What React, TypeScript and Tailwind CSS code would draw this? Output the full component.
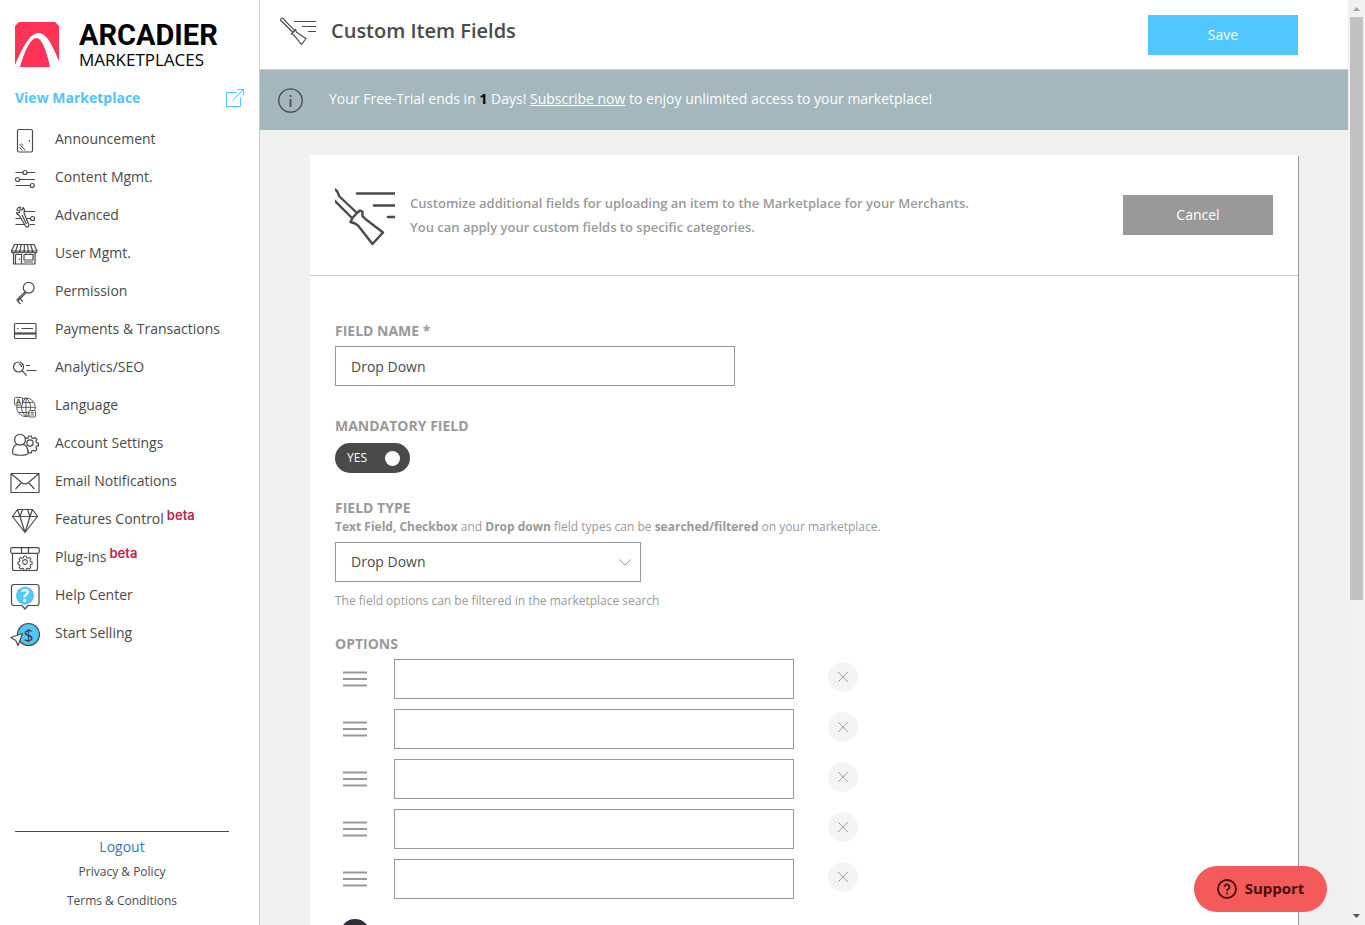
import { useState } from 'react';
import type { ReactNode } from 'react';

const GEAR =
  'M-1.3-7h2.6l.5 1.9 1.5.6 1.7-1 1.9 1.9-1 1.7.6 1.5 1.9.5v2.6l-1.9.5-.6 1.5 1 1.7-1.9 1.9-1.7-1-1.5.6-.5 1.9h-2.6l-.5-1.9-1.5-.6-1.7 1-1.9-1.9 1-1.7-.6-1.5-1.9-.5v-2.6l1.9-.5.6-1.5-1-1.7 1.9-1.9 1.7 1 1.5-.6z';

type Item = { label: string; beta?: boolean; icon: ReactNode };

const items: Item[] = [
  {
    label: 'Announcement',
    icon: (
      <>
        <rect x="7.5" y="7.5" width="15" height="22.5" rx="1.5" />
        <path d="M19.3 18v2M9.5 22l6 6.500M9.500 25.500l2.800 3M11.500 21.500l1.500 2" strokeWidth="1" />
      </>
    ),
  },
  {
    label: 'Content Mgmt.',
    icon: (
      <>
        <path d="M5.5 12.5H13M17 12.5h8M9.5 19.5H25M5.5 25.5h14.500" />
        <circle cx="15" cy="12.500" r="2" />
        <circle cx="7.500" cy="19.500" r="2" />
        <circle cx="22.300" cy="25.500" r="2" />
      </>
    ),
  },
  {
    label: 'Advanced',
    icon: (
      <>
        <path d="M15 13.500h10M5.500 20.500h6M17 20.500h3.500M5.500 26.500H15M20 26.500h5" />
        <circle cx="22.500" cy="20.500" r="2" />
        <path d="M9 17l6.500 11a1.800 1.800 0 0 0 3.200-1.800L14 15c1-2 .5-4-1-5.500l-1 2.500-2-.5.500-2.500C8 9.500 6.800 11 7 12.500l3 .5-1 2-2.500-.5C7 16.500 8 17 9 17zM12 17l4.500 9" />
      </>
    ),
  },
  {
    label: 'User Mgmt.',
    icon: (
      <>
        <path d="M4.500 8.500h19.500l3 6.500H1.500zM1.500 15c0 2.600 4 2.600 4.200 0 .2 2.600 4 2.600 4.200 0 .2 2.600 4 2.600 4.300 0 .2 2.600 4 2.600 4.200 0 .2 2.600 4 2.600 4.200 0 .2 2.600 4.200 2.600 4.400 0M7.800 8.500L5.700 15M11.200 8.500L9.900 15M14.300 8.500V15M17.400 8.500l1 6.500M20.500 8.500l2.100 6.500" />
        <path d="M3.500 17v11h21.500V17M5.500 28v-9.500h6V28M14 18.500h9v5.500h-9zM9.500 22.500v1.500M14 26h9" />
      </>
    ),
  },
  {
    label: 'Permission',
    icon: (
      <>
        <circle cx="18.700" cy="13.700" r="5.400" />
        <path d="M15 17.800L6.800 26M16 18.800l-8.500 8.500M6.800 26l3.700 4M9 23.700l3.700 3.800" />
      </>
    ),
  },
  {
    label: 'Payments & Transactions',
    icon: (
      <>
        <rect x="4.500" y="11.500" width="21.500" height="15" rx="1" />
        <path d="M7 16.500h1.500M11.500 16.500h11.500" />
        <path d="M4.500 21.500H26" strokeWidth="2.200" />
      </>
    ),
  },
  {
    label: 'Analytics/SEO',
    icon: (
      <>
        <circle cx="8.500" cy="17" r="5" />
        <path d="M12.200 20.700l4.500 5M16 15.500h4M16.500 20.500h10M8.500 14a3 3 0 0 1 3 3" />
      </>
    ),
  },
  {
    label: 'Language',
    icon: (
      <g strokeWidth="0.900">
        <circle cx="16" cy="19.300" r="9.300" />
        <path d="M16 10v18.600M6.700 19.300h18.600M8.500 14.500h15M8.500 24.500h15M16 10c-6 5-6 13.600 0 18.600M16 10c6 5 6 13.600 0 18.600" />
        <rect x="4.500" y="9.500" width="8" height="7.500" rx="1" fill="white" />
        <rect x="19" y="22.500" width="6.500" height="6.500" rx="1" fill="white" />
        <path d="M20.500 24.500h3.500M22.200 23.500v1M23.500 24.500c0 1.500-1.500 2.500-3 3M21 24.500c0 1.500 1.500 2.500 3 3" strokeWidth="0.700" />
        <text x="8.500" y="15.700" fontSize="7" textAnchor="middle" fill="#4a4a4a" stroke="none" className="font-bold">A</text>
      </g>
    ),
  },
  {
    label: 'Account Settings',
    icon: (
      <>
        <g transform="translate(20 17)">
          <path d={GEAR} />
          <circle r="3.200" />
        </g>
        <path
          fill="white"
          d="M10 8.500c6.500 0 6.500 7.500 3 9.800 3.500.7 5 4 5 8.700 0 3-15.500 3-15.500 0 0-4.700 1.500-8 4.700-8.700C3.500 16 3.500 8.500 10 8.500zM7.200 18.300c1.800 1 4 1 5.800 0"
        />
      </>
    ),
  },
  {
    label: 'Email Notifications',
    icon: (
      <path d="M1 9.500h28v19H1zM1 9.500l10.500 9c2.500 2 4.500 2 7 0l10.500-9M5.500 25l6-6.500M24.500 25l-6-6.500" />
    ),
  },
  {
    label: 'Features Control',
    beta: true,
    icon: (
      <path d="M7.500 7.500h15l5 7L15 30.500 2.500 14.500zM2.500 14.500h25M7.500 7.500l2.500 7 5 16 5-16 2.500-7M10 14.500l2.500-7M20 14.500l-2.500-7" />
    ),
  },
  {
    label: 'Plug-ins',
    beta: true,
    icon: (
      <>
        <rect x="0.700" y="7.700" width="28.600" height="5.600" rx="1.500" />
        <path d="M2.500 13.300v15.200a2 2 0 0 0 2 2h21a2 2 0 0 0 2-2V13.300M11.500 7.700v5.600M18.500 7.700v5.600" />
        <g transform="translate(15 22) scale(0.850)">
          <path d={GEAR} />
          <circle r="2.800" />
        </g>
      </>
    ),
  },
  {
    label: 'Help Center',
    icon: (
      <>
        <path d="M4 6.500h22.500a2.500 2.500 0 0 1 2.500 2.500v16a2.500 2.500 0 0 1-2.500 2.500H18l-3 3.500-3-3.500H4A2.500 2.500 0 0 1 1.500 25V9A2.500 2.500 0 0 1 4 6.500z" />
        <circle cx="15" cy="17.700" r="9" fill="#50c7ff" stroke="none" />
        <text x="15" y="23.700" fontSize="17" textAnchor="middle" fill="white" stroke="none" className="font-bold">?</text>
      </>
    ),
  },
  {
    label: 'Start Selling',
    icon: (
      <>
        <circle cx="18.500" cy="18.500" r="11" fill="#50c7ff" />
        <text x="18.500" y="24.500" fontSize="17" textAnchor="middle" fill="#3a3a3a" stroke="none">$</text>
        <path d="M.8 21.500l11.700-4-4.500 12-2.200-5z" fill="white" />
      </>
    ),
  },
];

function Brand() {
  return (
    <div className="flex items-start gap-5">
      <svg viewBox="0 0 44 45" className="h-[45px] w-11 shrink-0" aria-hidden="true">
        <path d="M4 0h36l4 4v41H0V4z" fill="#ff3355" />
        <path d="M0 43C10 20 16 11 24 11c8 0 14 14 20 28v6h-9C32 30 27 16 21.500 16 15.500 16 10 28 5 45H0z" fill="white" />
      </svg>
      <div className="text-black">
        <div className="font-[Roboto,sans-serif] text-[29px] font-bold leading-[26px]">ARCADIER</div>
        <div className="text-[17px] leading-6">MARKETPLACES</div>
      </div>
    </div>
  );
}

function Sidebar() {
  return (
    <aside className="flex w-[260px] shrink-0 flex-col overflow-hidden border-r border-[#ccc] bg-white">
      <div className="px-[15px] pt-[22px]">
        <Brand />
      </div>
      <a href="#marketplace" className="mt-[10px] flex h-8 items-center justify-between pl-[15px] pr-[14px] text-sm font-bold text-[#50c4ff]">
        View Marketplace
        <svg viewBox="0 0 20 20" className="size-5" fill="none" stroke="currentColor" aria-hidden="true">
          <path d="M11.500 4.500h-10v14h14v-9M7.500 12.500l11-11M12.500 1.500h6v6" />
        </svg>
      </a>
      <nav className="mt-[6px]">
        <ul>
          {items.map((item) => (
            <li key={item.label}>
              <a href="#menu" className="flex h-[38px] items-center gap-[15px] pl-[10px] text-sm">
                <svg
                  viewBox="0 0 30 34"
                  className="h-[34px] w-[30px] shrink-0"
                  fill="none"
                  stroke="#4a4a4a"
                  strokeWidth="1.200"
                  strokeLinejoin="round"
                  aria-hidden="true"
                >
                  {item.icon}
                </svg>
                <span>
                  {item.label}
                  {item.beta && (
                    <sup className="-top-1 ml-[3px] font-[Inter,sans-serif] text-[13px] font-semibold text-[#c4204f]">beta</sup>
                  )}
                </span>
              </a>
            </li>
          ))}
        </ul>
      </nav>
      <div className="ml-[15px] mr-[30px] mt-auto flex flex-col items-center border-t border-[#4a4a4a] pb-[15px] pt-[5px] text-xs">
        <a href="#logout" className="text-sm leading-5 text-[#337ab7]">Logout</a>
        <a href="#privacy" className="mt-[6px] leading-[18px]">Privacy &amp; Policy</a>
        <a href="#terms" className="mt-[11px] leading-[18px]">Terms &amp; Conditions</a>
      </div>
    </aside>
  );
}

function Toggle() {
  const [on, setOn] = useState(true);
  return (
    <label className="relative mt-[7px] flex h-[30px] w-[75px] cursor-pointer items-center justify-between rounded-full bg-[#4a4a4a] pl-3 pr-[10px] text-xs text-white">
      <input
        type="checkbox"
        aria-label="Mandatory field"
        className="absolute inset-0 cursor-pointer appearance-none"
        checked={on}
        onChange={(e) => setOn(e.target.checked)}
      />
      <span>{on ? 'YES' : 'NO'}</span>
      <span className="size-[15px] rounded-full bg-white" />
    </label>
  );
}

function OptionRow({ index }: { index: number }) {
  return (
    <li className="flex h-10 items-center">
      <svg viewBox="0 0 24 16" className="ml-2 h-4 w-6 shrink-0" stroke="#999" strokeWidth="2" aria-hidden="true">
        <path d="M0 1.500h24M0 8h24M0 14.500h24" />
      </svg>
      <input aria-label={`Option ${index}`} className="ml-[27px] h-10 w-[400px] border border-[#999] px-[15px] outline-none" />
      <button type="button" aria-label={`Remove option ${index}`} className="mb-1 ml-[34px] flex size-[30px] items-center justify-center rounded-full bg-[#f4f4f4]">
        <svg viewBox="0 0 10 10" className="size-[10px]" stroke="#999" strokeWidth="0.900" aria-hidden="true">
          <path d="M0 0l10 10M10 0L0 10" />
        </svg>
      </button>
    </li>
  );
}

export default function App() {
  const label = 'text-sm font-bold leading-5';
  return (
    <div className="flex h-screen overflow-hidden bg-[#f0f0f0] font-['Open_Sans',sans-serif] text-sm text-[#4a4a4a]">
      <Sidebar />
      <div className="flex min-w-0 flex-1 flex-col">
        <header className="flex h-[70px] shrink-0 items-center justify-between border-b border-[#ccc] bg-white pl-5 pr-[50px]">
          <div className="flex items-center gap-[15px] pb-2">
            <svg viewBox="0 0 36 28" className="h-7 w-9" fill="none" stroke="#4a4a4a" strokeWidth="1.200" strokeLinejoin="round" aria-hidden="true">
              <path d="M14 4.500h22M22 9.500h14M28 14.500h8" />
              <path d="M.8 3.500c-.6-1.800 1.200-3.200 2.800-2l2.200 3.200 9 9-1.800 1.800-9-9zM15.500 12.500l1 2.800 9.500 6.200-4.500 6-7.300-9.200-2.700-1.300z" />
            </svg>
            <h1 className="text-xl font-semibold">Custom Item Fields</h1>
          </div>
          <button type="button" className="h-10 w-[150px] bg-[#50c7ff] text-white">Save</button>
        </header>

        <div className="flex h-[60px] shrink-0 items-center gap-[26px] bg-[#a3b7bc] pl-[18px] text-white">
          <svg viewBox="0 0 25 25" className="size-[25px]" fill="none" stroke="#4a4a4a" strokeWidth="1.300" aria-hidden="true">
            <circle cx="12.500" cy="12.500" r="11.700" />
            <path d="M12.500 11v8M12.500 7v1.800" strokeWidth="1.700" />
          </svg>
          <p className="pb-[2px]">
            Your Free-Trial ends in <b className="text-black">1</b> Days!{' '}
            <a href="#subscribe" className="underline">Subscribe now</a> to enjoy unlimited access to your marketplace!
          </p>
        </div>

        <main className="min-h-0 flex-1 overflow-y-auto px-[50px] pt-[25px] [scrollbar-width:none]">
          <section className="bg-white shadow-[1px_1px_0_#999]">
            <div className="flex h-[121px] items-center justify-between border-b border-[#ccc] px-[25px]">
              <div className="flex items-center gap-[15px]">
                <svg viewBox="0 0 60 60" className="size-[60px]" fill="none" stroke="#4a4a4a" strokeWidth="2.400" strokeLinejoin="round" aria-hidden="true">
                  <path d="M22 8.500h40M39 20.500h23M53 32h9" strokeWidth="2.600" strokeLinecap="round" />
                  <path d="M-2 3l4 3 2.500 5.500 17.500 16.500M-2 14l19.500 19.500M22 28l3-2.500 2.500 1.200v4.500L31 34.500l17 13L37.500 59 23 40.500l-3-2-4.500-1.500 2-4z" />
                </svg>
                <p className="text-[13px] font-semibold leading-6 text-[#999]">
                  Customize additional fields for uploading an item to the Marketplace for your Merchants.
                  <br />
                  You can apply your custom fields to specific categories.
                </p>
              </div>
              <button type="button" className="h-10 w-[150px] bg-[#999] text-white">Cancel</button>
            </div>

            <form className="flex flex-col items-start px-[25px] pb-10 pt-[45px] text-[#999]" onSubmit={(e) => e.preventDefault()}>
              <label htmlFor="field-name" className={label}>FIELD NAME *</label>
              <input id="field-name" defaultValue="Drop Down" className="mt-[5px] h-10 w-[400px] border border-[#999] px-[15px] text-[#4a4a4a] outline-none" />

              <div className={`mt-[30px] ${label}`}>MANDATORY FIELD</div>
              <Toggle />

              <label htmlFor="field-type" className={`mt-[25px] ${label}`}>FIELD TYPE</label>
              <p className="text-xs leading-[18px]">
                <b>Text Field, Checkbox</b> and <b>Drop down</b> field types can be <b>searched/filtered</b> on your marketplace.
              </p>
              <div className="relative mt-[6px]">
                <select id="field-type" defaultValue="Drop Down" className="h-10 w-[306px] appearance-none border border-[#999] bg-white px-[15px] text-[#4a4a4a] outline-none">
                  <option>Drop Down</option>
                  <option>Text Field</option>
                  <option>Checkbox</option>
                </select>
                <svg viewBox="0 0 12 7" className="pointer-events-none absolute right-[10px] top-[17px] h-[7px] w-3" fill="none" stroke="#999" aria-hidden="true">
                  <path d="M.3.500L6 6l5.700-5.500" />
                </svg>
              </div>
              <p className="mt-[10px] text-xs leading-[18px]">The field options can be filtered in the marketplace search</p>

              <div className={`mt-6 ${label}`}>OPTIONS</div>
              <ul className="mt-[5px] flex flex-col gap-[10px]">
                {[1, 2, 3, 4, 5].map((n) => (
                  <OptionRow key={n} index={n} />
                ))}
              </ul>
              <button type="button" aria-label="Add option" className="ml-[5px] mt-5 flex size-[30px] items-center justify-center rounded-full bg-[#302d3b]">
                <svg viewBox="0 0 12 12" className="size-3" stroke="white" strokeWidth="1.500" aria-hidden="true">
                  <path d="M6 0v12M0 6h12" />
                </svg>
              </button>
            </form>
          </section>
        </main>
      </div>

      <div className="flex w-[17px] shrink-0 flex-col items-center bg-[#f1f1f1]" aria-hidden="true">
        <svg viewBox="0 0 17 17" className="size-[17px] shrink-0">
          <path d="M5 11l3.500-4 3.500 4z" fill="#a3a3a3" />
        </svg>
        <div className="flex w-[13px] flex-1 flex-col">
          <div className="basis-[65.400%] bg-[#c1c1c1]" />
        </div>
        <svg viewBox="0 0 17 17" className="size-[17px] shrink-0">
          <path d="M5 6l3.500 4L12 6z" fill="#505050" />
        </svg>
      </div>

      <button type="button" className="fixed bottom-[13px] right-[38px] flex h-[46px] w-[133px] items-center justify-center gap-2 rounded-full bg-[#f55a5a] text-[15px] font-bold text-[#460f10]">
        <svg viewBox="0 0 20 20" className="size-5" fill="none" stroke="currentColor" strokeWidth="1.800" aria-hidden="true">
          <circle cx="10" cy="10" r="9" />
          <path d="M7.500 8a2.500 2.500 0 1 1 3.800 2.100c-.9.600-1.300 1-1.300 2M10 13.600v1.700" />
        </svg>
        Support
      </button>
    </div>
  );
}
